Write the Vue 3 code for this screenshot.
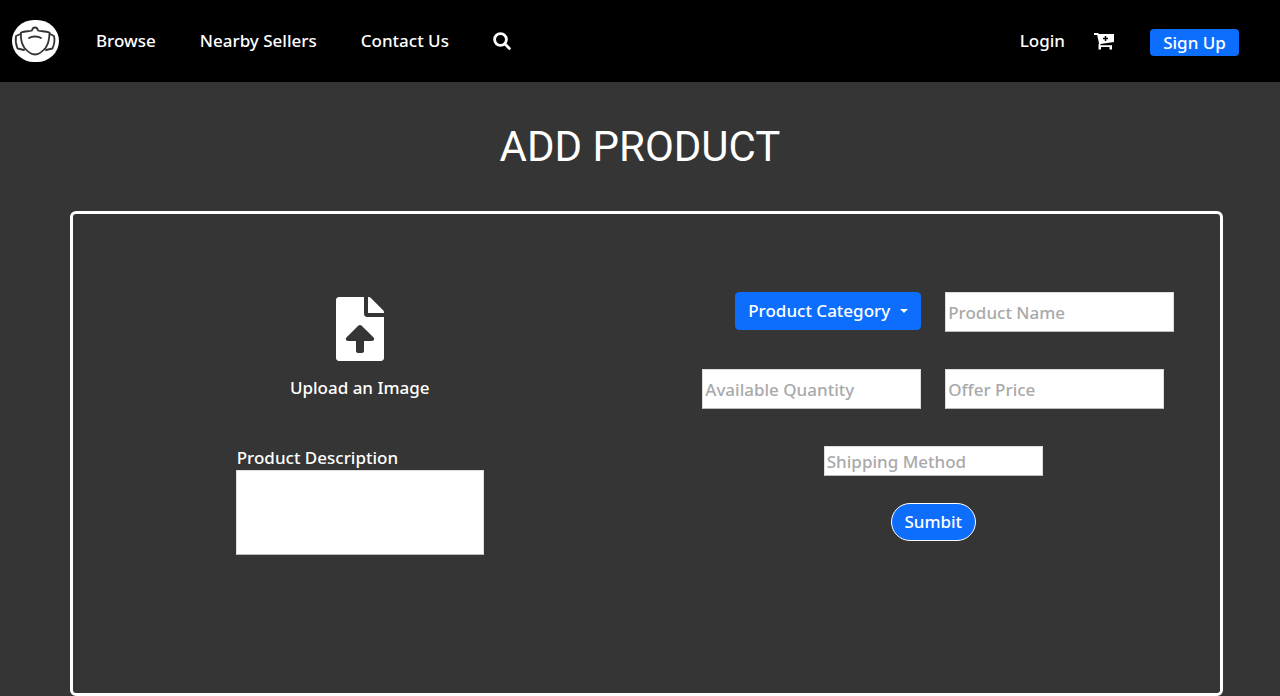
<script setup>
import { reactive } from 'vue'

const links = ['Browse', 'Nearby Sellers', 'Contact Us']
const product = reactive({
  category: '',
  name: '',
  quantity: '',
  price: '',
  shipping: '',
  description: ''
})
</script>

<template>
  <div class="page">
    <header class="bar">
      <a class="logo" href="#" aria-label="Home">
        <svg viewBox="0 0 47 42" width="47" height="42" aria-hidden="true">
          <rect width="47" height="42" rx="22" ry="21" fill="#fff" />
          <g fill="none" stroke="#333" stroke-width="1.8" stroke-linejoin="round" stroke-linecap="round">
            <path d="M9 12.500C13 11 17 11.500 20 10.500C20.500 6.500 25.500 6.500 26 10.500C29 11.500 33 11 37.500 12.500C37.500 18 37 23 33.500 28C30 32 27 34.500 23 34.500C19 34.500 16 32 12.500 28C9 23 8.500 18 9 12.500Z" />
            <path d="M8.500 14L4 16C3.300 20 4 25 5.500 28.500L12 30" />
            <path d="M38 14L42 16C43 20 42 25 40.500 28.500L34 30" />
            <path d="M17 18C20 16 26 16 29 18" />
          </g>
        </svg>
      </a>
      <nav class="links" aria-label="Main">
        <a v-for="link in links" :key="link" href="#">{{ link }}</a>
        <a class="icon" href="#" aria-label="Search">
          <svg viewBox="0 0 18 18" width="18" height="18" aria-hidden="true">
            <g fill="none" stroke="#fff" stroke-width="2.800" stroke-linecap="round">
              <circle cx="7.500" cy="7.500" r="5.900" />
              <path d="M12 12L16.400 16.400" />
            </g>
          </svg>
        </a>
      </nav>
      <div class="account">
        <a href="#">Login</a>
        <a class="icon" href="#" aria-label="Cart">
          <svg viewBox="0 0 20 17" width="20" height="17" aria-hidden="true">
            <path d="M0 0H4L5 1H20V9L6.500 11V12.200H18V16.500H15.500V14H7V16.500H4.500V11.500L5 10.200L3.200 2H0Z" fill="#fff" />
            <path d="M11.500 3V8M9 5.500H14" stroke="#000" stroke-width="1.500" />
          </svg>
        </a>
        <button class="signup" type="button">Sign Up</button>
      </div>
    </header>

    <main>
      <h1>ADD PRODUCT</h1>
      <form class="card" @submit.prevent>
        <section class="media">
          <button class="upload" type="button">
            <svg viewBox="0 0 384 512" width="48" height="64" aria-hidden="true">
              <path fill="#fff" d="M224 136V0H24C10.700 0 0 10.700 0 24v464c0 13.300 10.700 24 24 24h336c13.300 0 24-10.700 24-24V160H248c-13.200 0-24-10.800-24-24zm65.200 216H224v80c0 8.800-7.200 16-16 16h-32c-8.800 0-16-7.200-16-16v-80H94.800c-14.300 0-21.400-17.300-11.300-27.400l96.400-95.700c6.700-6.600 17.400-6.600 24 0l96.400 95.700c10.200 10.100 3.100 27.400-11.100 27.400zM377 105L279.100 7c-4.500-4.500-10.600-7-17-7H256v128h128v-6.100c0-6.300-2.500-12.400-7-16.900z" />
            </svg>
            <span>Upload an Image</span>
          </button>
          <div class="description">
            <label for="description">Product Description</label>
            <textarea id="description" v-model="product.description"></textarea>
          </div>
        </section>

        <section class="details">
          <div class="fields">
            <div class="category">
              <select v-model="product.category" aria-label="Product Category">
                <option value="">Product Category</option>
              </select>
              <span class="caret"></span>
            </div>
            <input v-model="product.name" class="wide" type="text" placeholder="Product Name" aria-label="Product Name">
            <input v-model="product.quantity" class="quantity" type="text" placeholder="Available Quantity" aria-label="Available Quantity">
            <input v-model="product.price" type="text" placeholder="Offer Price" aria-label="Offer Price">
          </div>
          <input v-model="product.shipping" class="shipping" type="text" placeholder="Shipping Method" aria-label="Shipping Method">
          <button class="submit" type="submit">Sumbit</button>
        </section>
      </form>
    </main>
  </div>
</template>

<style>
body {
  margin: 0;
  background: #353535;
}
</style>

<style scoped>
.page,
.page * {
  box-sizing: border-box;
}

.page {
  color: #fff;
  font-family: "Noto Sans", "Open Sans", sans-serif;
  font-size: 17px;
  font-weight: 500;
  line-height: 24px;
}

button,
input,
select,
textarea {
  font: inherit;
  margin: 0;
}

a {
  color: #fff;
  text-decoration: none;
}

svg {
  display: block;
}

.bar {
  display: flex;
  align-items: center;
  height: 82px;
  padding: 0 41px 0 12px;
  background: #000;
}

.links {
  display: flex;
  align-items: center;
  gap: 44px;
  margin-left: 37px;
}

.account {
  display: flex;
  align-items: center;
  margin-left: auto;
}

.account .icon {
  margin: 0 36px 0 29px;
}

.signup {
  width: 89px;
  height: 27px;
  margin-top: 3px;
  padding: 0;
  border: 0;
  border-radius: 4px;
  background: #0d6efd;
  color: #fff;
}

h1 {
  margin: 41px 0 40px;
  font-family: Roboto, sans-serif;
  font-size: 42px;
  font-weight: 400;
  line-height: 48px;
  text-align: center;
}

.card {
  display: grid;
  grid-template-columns: 1fr 1fr;
  margin: 0 57px 0 70px;
  padding: 78px 0 138px;
  border: 3px solid #fff;
  border-radius: 6px;
}

.media,
.details {
  display: flex;
  flex-direction: column;
  align-items: center;
}

.upload {
  display: flex;
  flex-direction: column;
  align-items: center;
  gap: 15px;
  margin-top: 5px;
  padding: 0;
  border: 0;
  background: none;
  color: #fff;
}

.description {
  display: flex;
  flex-direction: column;
  width: 248px;
  margin-top: 46px;
}

.description label {
  padding-left: 1px;
}

textarea,
input {
  padding: 0 2px;
  border: 1px solid #ddd;
  border-bottom-color: #bbb;
  border-radius: 0;
  background: #fff;
  color: #333;
}

textarea {
  height: 85px;
  resize: none;
}

input {
  width: 219px;
  height: 40px;
}

input::placeholder {
  color: #a9a9a9;
  opacity: 1;
}

.wide {
  width: 229px;
}

.fields {
  display: grid;
  grid-template-columns: 1fr 1fr;
  gap: 37px 24px;
  width: 482px;
}

.category {
  position: relative;
  justify-self: end;
}

.quantity {
  justify-self: end;
}

.category select {
  appearance: none;
  width: 186px;
  height: 38px;
  padding: 0 12px;
  border: 1px solid #0d6efd;
  border-radius: 4px;
  background: #0d6efd;
  color: #fff;
}

.caret {
  position: absolute;
  top: 17px;
  right: 13px;
  border: 4px solid transparent;
  border-top-color: #fff;
  border-bottom: 0;
  pointer-events: none;
}

.shipping {
  height: 30px;
  margin-top: 37px;
}

.submit {
  width: 85px;
  height: 38px;
  margin-top: 27px;
  padding: 0;
  border: 1px solid #fff;
  border-radius: 19px;
  background: #0d6efd;
  color: #fff;
}
</style>
